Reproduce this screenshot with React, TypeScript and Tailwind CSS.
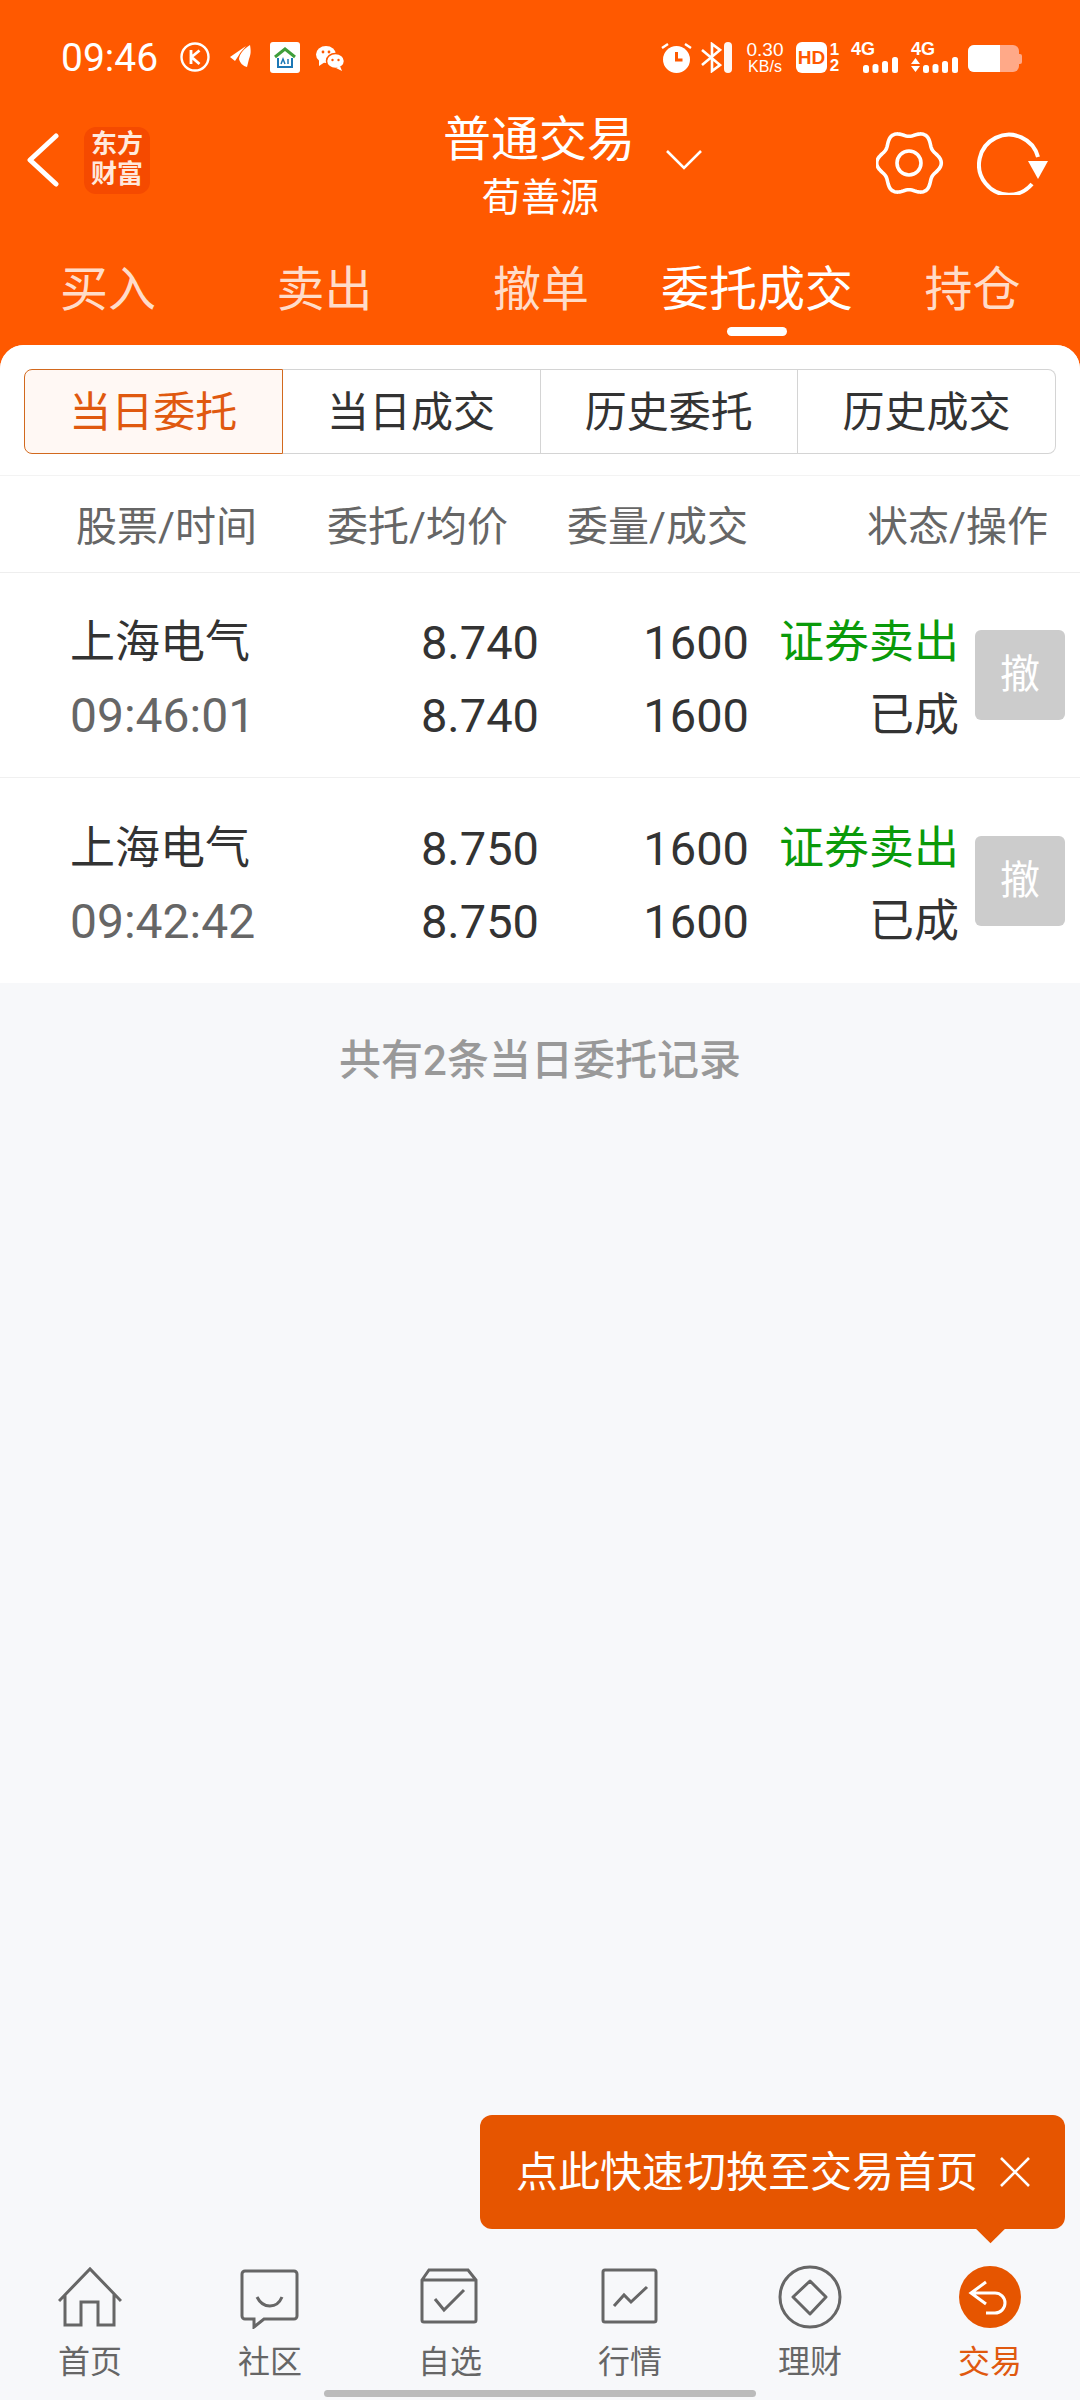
const gearPath = (() => {
  const pts: string[] = [];
  for (let i = 0; i < 120; i++) {
    const t = (i / 120) * Math.PI * 2;
    const r = 29.5 + 2.8 * Math.cos(6 * t);
    pts.push(`${(33 + r * Math.cos(t)).toFixed(2)} ${(32 + r * Math.sin(t)).toFixed(2)}`);
  }
  return `M${pts.join('L')}Z`;
})();

function StatusBar() {
  return (
    <div className="h-[100px] pt-[42px] pl-[61px] flex items-start text-white">
      <span className="text-[39px] leading-[32px] w-[119px]">09:46</span>
      <svg width="30" height="30" viewBox="0 0 30 30" fill="none" stroke="#fff">
        <circle cx="15" cy="15" r="13.5" strokeWidth="2.4" />
        <path d="M11 8v14M19.5 8.5 11.5 15l8 7" strokeWidth="2.8" />
      </svg>
      <svg className="ml-[20px]" width="21" height="30" viewBox="0 0 21 30" fill="#fff">
        <path d="M0 15 16 4c-3 4-6 6-7 9l-4 6zM9 17c1-6 5-10 11-14 1 6 1 9-1 14l-2 8c-4-1-7-4-8-8z" />
      </svg>
      <div className="ml-[19px] w-[30px] h-[31px] bg-white rounded-[3px] flex items-center justify-center">
        <svg width="24" height="24" viewBox="0 0 24 24" fill="none">
          <path d="M2 11 12 3l10 8" stroke="#3f9e3b" strokeWidth="3" />
          <path d="M5 12v9h14v-9" stroke="#1b77b5" strokeWidth="2" />
          <path d="M8 18l2-5 2 5M15 13v5" stroke="#1b77b5" strokeWidth="1.5" />
        </svg>
      </div>
      <svg className="ml-[16px] mt-[3px]" width="29" height="26" viewBox="0 0 29 26" fill="#fff">
        <ellipse cx="10" cy="9.5" rx="10" ry="8.5" />
        <path d="M3 15 3 21 9 17z" />
        <ellipse cx="19.5" cy="16" rx="9" ry="7.5" stroke="#ff5900" strokeWidth="1.5" />
        <path d="M24 21l2 5-6-3z" />
        <circle cx="7" cy="7" r="1.4" fill="#ff5900" />
        <circle cx="13" cy="7" r="1.4" fill="#ff5900" />
        <circle cx="16.500" cy="15" r="1.2" fill="#ff5900" />
        <circle cx="22.500" cy="15" r="1.2" fill="#ff5900" />
      </svg>

      <div className="ml-[316px] flex items-start">
        <svg width="31" height="31" viewBox="0 0 31 31" fill="#fff">
          <circle cx="15.500" cy="17.500" r="13.500" />
          <path d="M15.500 10v8h6" fill="none" stroke="#ff5900" strokeWidth="3" />
          <path d="M1 6l6-4M30 6l-6-4" fill="none" stroke="#fff" strokeWidth="2.4" />
        </svg>
        <svg className="ml-[9px]" width="21" height="31" viewBox="0 0 21 31" fill="none" stroke="#fff" strokeWidth="2.6">
          <path d="M1 8l18 15-8 6V2l8 6L1 23" />
        </svg>
        <div className="ml-[2px] w-[8px] h-[31px] rounded-full bg-white/95" />
        <div className="ml-[13px] w-[40px] flex flex-col items-center font-['Liberation_Sans',sans-serif]">
          <span className="text-[19px] leading-[17px] mt-[-1px]">0.30</span>
          <span className="text-[16px] leading-[15px] mt-[1px]">KB/s</span>
        </div>
        <div className="ml-[11px] w-[31px] h-[31px] rounded-[6px] bg-white flex items-center justify-center text-[#ff5900] text-[19px] leading-none font-bold font-['Liberation_Sans',sans-serif]">
          HD
        </div>
        <div className="ml-[2px] w-[11px] flex flex-col items-center text-[17px] leading-[16px] font-bold font-['Liberation_Sans',sans-serif]">
          <span>1</span>
          <span>2</span>
        </div>
        <div className="ml-[11px] w-[47px] flex flex-col">
          <span className="text-[18px] leading-[15px] font-bold font-['Liberation_Sans',sans-serif]">4G</span>
          <svg className="ml-[12px]" width="35" height="16" viewBox="0 0 35 16" fill="#fff">
            <rect x="0" y="8" width="6" height="8" rx="2.5" />
            <rect x="9.500" y="7" width="6" height="9" rx="2.5" />
            <rect x="19" y="4" width="6" height="12" rx="2.5" />
            <rect x="29" y="0" width="6" height="16" rx="2.5" />
          </svg>
        </div>
        <div className="ml-[13px] w-[47px] flex flex-col">
          <span className="text-[18px] leading-[15px] font-bold font-['Liberation_Sans',sans-serif]">4G</span>
          <svg width="47" height="16" viewBox="0 0 47 16" fill="#fff">
            <path d="M0 7 4.500 1 9 7zM0 9h9l-4.500 6z" />
            <rect x="12" y="8" width="6" height="8" rx="2.500" />
            <rect x="21.500" y="7" width="6" height="9" rx="2.500" />
            <rect x="31" y="4" width="6" height="12" rx="2.500" />
            <rect x="41" y="0" width="6" height="16" rx="2.500" />
          </svg>
        </div>
        <div className="ml-[10px] mt-[3px] flex items-center">
          <div className="w-[51px] h-[27px] rounded-[6px] bg-[#ffa988] overflow-hidden">
            <div className="w-[32px] h-full bg-white" />
          </div>
          <div className="w-[3px] h-[10px] rounded-r-[2px] bg-[#ffa988]" />
        </div>
      </div>
    </div>
  );
}

function NavBar() {
  return (
    <div className="h-[120px] flex items-center">
      <svg className="ml-[27px]" width="32" height="54" viewBox="0 0 32 54" fill="none" stroke="#fff" strokeWidth="5" strokeLinecap="round" strokeLinejoin="round">
        <path d="M29 3 3 27l26 24" />
      </svg>
      <div className="ml-[25px] w-[66px] h-[67px] rounded-[12px] bg-[#f54a00] flex flex-col items-center justify-center text-[#ffe9dc] text-[26px] leading-[30px] font-bold font-['Liberation_Serif','Noto_Sans_CJK_SC',serif]">
        <span>东方</span>
        <span>财富</span>
      </div>
      <div className="ml-[294px] w-[190px] pt-[18px] flex flex-col items-center text-white">
        <span className="text-[48px] leading-[59px] whitespace-nowrap">普通交易</span>
        <span className="text-[39px] leading-[59px] whitespace-nowrap pl-[3px]">荀善源</span>
      </div>
      <svg className="ml-[32px]" width="36" height="20" viewBox="0 0 36 20" fill="none" stroke="#fff" strokeWidth="2.6">
        <path d="M1 1l17 17L35 1" />
      </svg>
      <svg className="ml-[174px] mt-[6px]" width="68" height="64" viewBox="0 0 68 64" fill="none" stroke="#fff" strokeWidth="3.6">
        <path d={gearPath} strokeLinejoin="round" />
        <circle cx="33" cy="32" r="12" />
      </svg>
      <svg className="ml-[33px] mt-[6px]" width="72" height="64" viewBox="0 0 72 64" fill="none">
        <path d="M55 53A30 30 0 1 1 61 26" stroke="#fff" strokeWidth="4" />
        <path d="M51 30h20l-10 18z" fill="#fff" />
      </svg>
    </div>
  );
}

const mainTabs = [
  { name: '买入', x: 'w-[216px]' },
  { name: '卖出', x: 'w-[217px]' },
  { name: '撤单', x: 'w-[216px]' },
  { name: '委托成交', x: 'w-[216px]', active: true },
  { name: '持仓', x: 'w-[215px]' },
];

function MainTabs() {
  return (
    <div className="h-[125px] flex pt-[46px]">
      {mainTabs.map((t) => (
        <div key={t.name} className={`${t.x} flex flex-col items-center`}>
          <span className={`text-[48px] leading-[48px] whitespace-nowrap ${t.active ? 'text-white' : 'text-[#ffdcc9]'}`}>{t.name}</span>
          {t.active && <div className="mt-[13px] w-[60px] h-[9px] rounded-full bg-white" />}
        </div>
      ))}
    </div>
  );
}

const orders = [
  { name: '上海电气', time: '09:46:01', price: '8.740', avg: '8.740' },
  { name: '上海电气', time: '09:42:42', price: '8.750', avg: '8.750' },
];

function OrderRow({ o, border }: { o: (typeof orders)[0]; border: boolean }) {
  return (
    <div className={`h-[205px] bg-white flex items-center ${border ? 'border-b border-[#f0f0f0]' : ''}`}>
      <div className="w-[300px] pl-[70px] pt-[8px]">
        <div className="text-[45px] leading-[73px] text-[#333]">{o.name}</div>
        <div className="text-[48px] leading-[73px] text-[#666]">{o.time}</div>
      </div>
      <div className="w-[239px] pt-[8px] text-right text-[47px] leading-[73px] text-[#333]">
        <div>{o.price}</div>
        <div>{o.avg}</div>
      </div>
      <div className="w-[210px] pt-[8px] text-right text-[47px] leading-[73px] text-[#333]">
        <div>1600</div>
        <div>1600</div>
      </div>
      <div className="w-[210px] pt-[8px] text-right text-[45px] leading-[73px]">
        <div className="text-[#0a9a0a]">证券卖出</div>
        <div className="text-[#333]">已成</div>
      </div>
      <div className="ml-[16px] w-[90px] h-[90px] rounded-[6px] bg-[#cccccc] flex items-center justify-center text-white text-[40px]">撤</div>
    </div>
  );
}

const subTabs = ['当日委托', '当日成交', '历史委托', '历史成交'];

const footerTabs = [
  {
    name: '首页',
    icon: <path d="M1 36 32 4l31 32M7 29v31h16V37h17v23h16V29" />,
  },
  {
    name: '社区',
    icon: <path d="M7 6h49a3 3 0 0 1 3 3v42a3 3 0 0 1-3 3H26l-10 8v-8H7a3 3 0 0 1-3-3V9a3 3 0 0 1 3-3zM19 32c6 12 20 12 25 0" />,
  },
  {
    name: '自选',
    icon: <path d="M4 15 11 5h39l8 10v40a2 2 0 0 1-2 2H6a2 2 0 0 1-2-2zM4 15h54M17 34l9 11 20-20" />,
  },
  {
    name: '行情',
    icon: <path d="M7 5h49a2 2 0 0 1 2 2v48a2 2 0 0 1-2 2H7a2 2 0 0 1-2-2V7a2 2 0 0 1 2-2zM16 41l10-11 7 7 16-15" />,
  },
  {
    name: '理财',
    icon: (
      <>
        <circle cx="32" cy="32" r="30" />
        <path d="M32 16 48 32 32 49 15 32z" strokeLinejoin="round" />
      </>
    ),
  },
];

function Footer() {
  return (
    <div className="relative h-[145px] pt-[10px] grid grid-cols-6 bg-[#f7f8fa]">
      {footerTabs.map((t) => (
        <div key={t.name} className="flex flex-col items-center">
          <svg width="64" height="64" viewBox="0 0 64 64" fill="none" stroke="#666" strokeWidth="3">
            {t.icon}
          </svg>
          <span className="mt-[15px] text-[32px] leading-[36px] text-[#666]">{t.name}</span>
        </div>
      ))}
      <div className="flex flex-col items-center">
        <svg width="64" height="64" viewBox="0 0 64 64" fill="none" stroke="#fff" strokeWidth="3">
          <circle cx="32" cy="32" r="31" fill="#e65500" stroke="none" />
          <path d="M28 17 13 28l15 11M13 28h24a10 10 0 0 1 0 20h-9" />
        </svg>
        <span className="mt-[15px] text-[32px] leading-[36px] text-[#e0590f]">交易</span>
      </div>
      <div className="absolute left-[324px] top-[135px] w-[432px] h-[7px] rounded-full bg-[#bbbbbb]" />
    </div>
  );
}

export default function App() {
  return (
    <div className="w-[1080px] h-[2400px] flex flex-col bg-[#ff5900] font-['Roboto','Noto_Sans_CJK_SC',sans-serif] overflow-hidden">
      <StatusBar />
      <NavBar />
      <MainTabs />

      <div className="flex-1 flex flex-col rounded-t-[24px] overflow-hidden bg-[#f7f8fa]">
        <div className="bg-white h-[131px] pt-[24px] px-[24px] border-b border-[#f3f3f3]">
          <div className="flex h-[85px]">
            {subTabs.map((t, i) => (
              <div
                key={t}
                className={`flex-1 flex items-center justify-center pt-[2px] text-[42px] ${
                  i === 0
                    ? 'text-[#e0590f] bg-[#fff8f4] border border-[#d2691e] rounded-l-[8px]'
                    : `text-[#333] border-y border-r border-[#d4d4d4] ${i === 3 ? 'rounded-r-[8px]' : ''}`
                }`}
              >
                {t}
              </div>
            ))}
          </div>
        </div>

        <div className="bg-white h-[97px] pt-[8px] grid grid-cols-[327px_240px_301px_1fr] items-center text-[41px] text-[#666] border-b border-[#eeeeee]">
          <span className="pl-[76px]">股票/时间</span>
          <span>委托/均价</span>
          <span>委量/成交</span>
          <span className="ml-[-1px]">状态/操作</span>
        </div>

        {orders.map((o, i) => (
          <OrderRow key={o.time} o={o} border={i === 0} />
        ))}

        <div className="relative flex-1">
          <p className="mt-[51px] text-center text-[42px] leading-[54px] font-medium text-[#999]">共有2条当日委托记录</p>

          <div className="absolute right-[15px] bottom-[26px] w-[585px] h-[114px] rounded-[12px] bg-[#e65500] flex items-center pl-[36px] text-white">
            <span className="text-[42px] whitespace-nowrap">点此快速切换至交易首页</span>
            <svg className="ml-[22px]" width="30" height="30" viewBox="0 0 30 30" fill="none" stroke="#fff" strokeWidth="2.6">
              <path d="M1 1l28 28M29 1 1 29" />
            </svg>
            <div className="absolute right-[64px] bottom-[-10px] w-[21px] h-[21px] rotate-45 bg-[#e65500]" />
          </div>
        </div>

        <Footer />
      </div>
    </div>
  );
}
